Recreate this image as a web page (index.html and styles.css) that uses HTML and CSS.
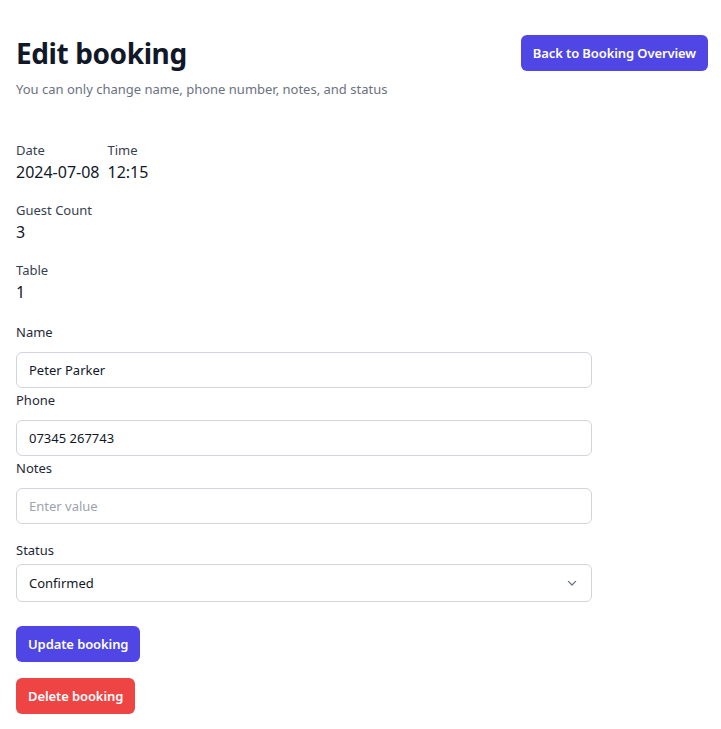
FILE: index.html
```html
<!DOCTYPE html>
<html lang="en">
<head>
<meta charset="utf-8">
<title>Edit booking</title>
<link rel="stylesheet" href="styles.css">
</head>
<body>
<div class="page">
  <div class="header">
    <div class="header-text">
      <h1 class="title">Edit booking</h1>
      <p class="subtitle">You can only change name, phone number, notes, and status</p>
    </div>
    <a class="btn btn-primary" href="#">Back to Booking Overview</a>
  </div>

  <div class="details">
    <div class="row">
      <div class="field">
        <div class="field-label">Date</div>
        <div class="field-value">2024-07-08</div>
      </div>
      <div class="field">
        <div class="field-label">Time</div>
        <div class="field-value">12:15</div>
      </div>
    </div>
    <div class="field">
      <div class="field-label">Guest Count</div>
      <div class="field-value">3</div>
    </div>
    <div class="field">
      <div class="field-label">Table</div>
      <div class="field-value">1</div>
    </div>
  </div>

  <form class="form">
    <label class="label" for="name">Name</label>
    <input class="input" id="name" type="text" value="Peter Parker">
    <label class="label" for="phone">Phone</label>
    <input class="input" id="phone" type="text" value="07345 267743">
    <label class="label" for="notes">Notes</label>
    <input class="input" id="notes" type="text" placeholder="Enter value">
    <label class="label label-status" for="status">Status</label>
    <div class="select-wrap">
      <select class="select" id="status">
        <option>Confirmed</option>
      </select>
      <svg class="chevron" width="16" height="16" viewBox="0 0 20 20" fill="none"><path d="M5.5 8l4.5 4.5L14.5 8" stroke="#6b7280" stroke-width="1.6" stroke-linecap="round" stroke-linejoin="round"/></svg>
    </div>
    <div class="actions">
      <button type="button" class="btn btn-primary">Update booking</button>
      <button type="button" class="btn btn-danger">Delete booking</button>
    </div>
  </form>
</div>
</body>
</html>
```

FILE: styles.css
```css
* { box-sizing: border-box; }
html, body { margin: 0; padding: 0; background: #ffffff; }
body {
  font-family: "Noto Sans", "Open Sans", sans-serif;
  color: #111827;
}
.page {
  padding: 35px 13px 16px 16px;
}
.header {
  display: flex;
  justify-content: space-between;
  align-items: flex-start;
}
.title {
  margin: 0;
  font-size: 28px;
  line-height: 36px;
  font-weight: 700;
  color: #111827;
  letter-spacing: -0.4px;
}
.subtitle {
  margin: 8px 0 0;
  font-size: 13px;
  line-height: 20px;
  color: #6b7280;
}
.btn {
  display: inline-flex;
  align-items: center;
  height: 36px;
  padding: 0 12px;
  border: 0;
  border-radius: 6px;
  font-family: inherit;
  font-size: 13px;
  font-weight: 600;
  letter-spacing: -0.1px;
  color: #ffffff;
  text-decoration: none;
  cursor: pointer;
}
.btn-primary { background: #4f46e5; }
.btn-danger { background: #ef4444; }
.details {
  margin-top: 41px;
  display: flex;
  flex-direction: column;
  gap: 16px;
}
.row { display: flex; gap: 8px; }
.field-label {
  font-size: 13px;
  line-height: 20px;
  color: #374151;
}
.field-value {
  font-size: 16px;
  line-height: 24px;
  color: #111827;
}
.form {
  margin-top: 16px;
  display: flex;
  flex-direction: column;
  align-items: flex-start;
  width: 576px;
}
.label {
  display: block;
  font-size: 13px;
  line-height: 24px;
  font-weight: 400;
  color: #1f2937;
  margin-bottom: 8px;
}
.input {
  display: block;
  width: 100%;
  height: 36px;
  padding: 0 12px;
  border: 1px solid #d1d5db;
  border-radius: 6px;
  font-family: inherit;
  font-size: 13px;
  color: #111827;
  background: #fff;
  outline: none;
}
.input::placeholder { color: #9ca3af; }
.label-status {
  margin-top: 16px;
  line-height: 20px;
  margin-bottom: 4px;
}
.select-wrap {
  position: relative;
  width: 100%;
}
.select {
  display: block;
  width: 100%;
  height: 38px;
  padding: 0 12px;
  border: 1px solid #d1d5db;
  border-radius: 6px;
  font-family: inherit;
  font-size: 13px;
  color: #111827;
  background: #fff;
  appearance: none;
  -webkit-appearance: none;
  outline: none;
}
.chevron {
  position: absolute;
  right: 12px;
  top: 11px;
  pointer-events: none;
}
.actions {
  margin-top: 24px;
  display: flex;
  flex-direction: column;
  align-items: flex-start;
  gap: 16px;
}
```
